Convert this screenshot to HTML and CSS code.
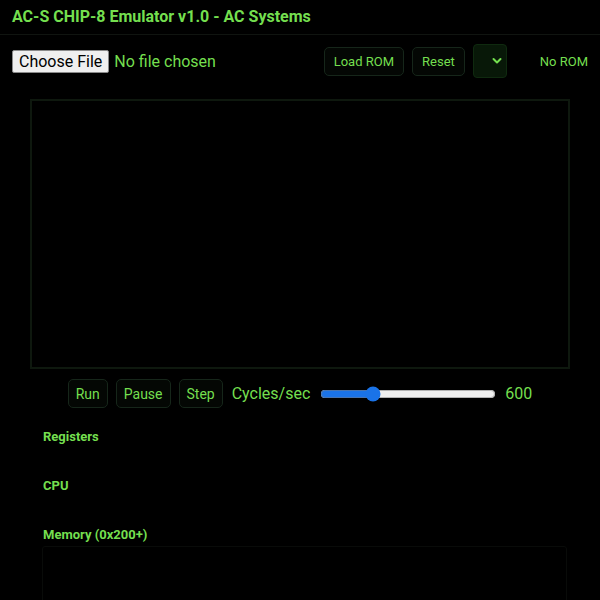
FILE: index.html
```html
<!DOCTYPE html>
<html lang="en">
<head>
<meta charset="utf-8">
<title>AC-S CHIP-8 Emulator</title>
<link rel="stylesheet" href="styles.css">
</head>
<body>
<header class="topbar">
  <h1 class="title">AC-S CHIP-8 Emulator v1.0 - AC Systems</h1>
</header>
<div class="toolbar">
  <input class="file" type="file">
  <div class="tools">
    <button class="btn tbtn load">Load ROM</button>
    <button class="btn tbtn reset">Reset</button>
    <span class="select-wrap">
      <select class="rom-select"><option></option></select>
      <svg class="chev" width="10" height="8" viewBox="0 0 10 8"><path d="M1.5 2 L5 5.5 L8.5 2" fill="none" stroke="#74df4f" stroke-width="2" stroke-linecap="round" stroke-linejoin="round"/></svg>
    </span>
    <span class="status">No ROM</span>
  </div>
</div>
<div class="screen"></div>
<div class="controls">
  <button class="btn cbtn">Run</button>
  <button class="btn cbtn">Pause</button>
  <button class="btn cbtn">Step</button>
  <label class="speed-label">Cycles/sec</label>
  <input class="speed" type="range" min="60" max="2000" value="600">
  <span class="speed-val">600</span>
</div>
<div class="panels">
  <section class="panel">
    <h2 class="panel-title">Registers</h2>
    <div class="panel-body"></div>
  </section>
  <section class="panel">
    <h2 class="panel-title">CPU</h2>
    <div class="panel-body"></div>
  </section>
  <section class="panel">
    <h2 class="panel-title">Memory (0x200+)</h2>
    <div class="memory"></div>
  </section>
</div>
</body>
</html>
```
FILE: styles.css
```css
html, body {
  margin: 0;
  padding: 0;
  background: #000;
  color: #74df4f;
  font-family: Roboto, "Liberation Sans", sans-serif;
  overflow: hidden;
}
.topbar {
  padding: 8px 12px;
  border-bottom: 1px solid #101410;
  height: 18px;
}
.title {
  margin: 0;
  font-size: 16px;
  line-height: 18px;
  font-weight: 700;
  color: #74df4f;
}
.toolbar {
  display: flex;
  align-items: center;
  justify-content: space-between;
  padding: 8px 12px;
  height: 36px;
}
.file {
  font-family: Roboto, "Liberation Sans", sans-serif;
  font-size: 16px;
  color: #74df4f;
}
.file::file-selector-button {
  font: inherit;
  color: #000;
  background: #efefef;
  border: 1px solid #8a8a8a;
  border-radius: 2px;
  padding: 1px 6px;
  margin-right: 5px;
  height: 23px;
}
.tools {
  display: flex;
  align-items: center;
}
.btn {
  font-family: Roboto, "Liberation Sans", sans-serif;
  color: #74df4f;
  background: #040704;
  border: 1px solid #16261a;
  border-radius: 5px;
}
.tbtn {
  font-size: 13px;
  height: 29px;
  padding: 0 9px;
}
.cbtn {
  font-size: 14px;
  height: 29px;
  padding: 0 7px;
}
.load { margin-right: 8px; }
.reset { margin-right: 8px; }
.select-wrap {
  position: relative;
  display: inline-block;
  width: 34px;
  height: 34px;
  margin-right: 33px;
}
.rom-select {
  appearance: none;
  width: 34px;
  height: 34px;
  background: #081808;
  border: 1px solid #0f2a0f;
  border-radius: 4px;
  color: #74df4f;
}
.chev {
  position: absolute;
  right: 5px;
  top: 13px;
  pointer-events: none;
}
.status {
  font-size: 13px;
}
.screen {
  margin: 12px 30px 0;
  height: 266px;
  border: 2px solid #0e180e;
}
.controls {
  display: flex;
  align-items: center;
  justify-content: center;
  gap: 8px;
  margin-top: 10px;
  height: 29px;
}
.speed-label {
  font-size: 16px;
  margin-left: 1px;
}
.speed {
  width: 176px;
  margin: 0 2px;
  accent-color: #1a73e8;
}
.speed-val {
  font-size: 16px;
  margin-left: -1px;
}
.panels {
  margin: 21px 30px 0;
}
.panel {
  padding: 0 3px 0 13px;
}
.panel-title {
  margin: 0;
  font-size: 13px;
  line-height: 15px;
  font-weight: 700;
  color: #74df4f;
}
.panel-body {
  height: 34px;
}
.memory {
  margin: 4px 0 0 -1px;
  height: 200px;
  border: 1px solid #090b09;
  border-radius: 3px;
}
```
